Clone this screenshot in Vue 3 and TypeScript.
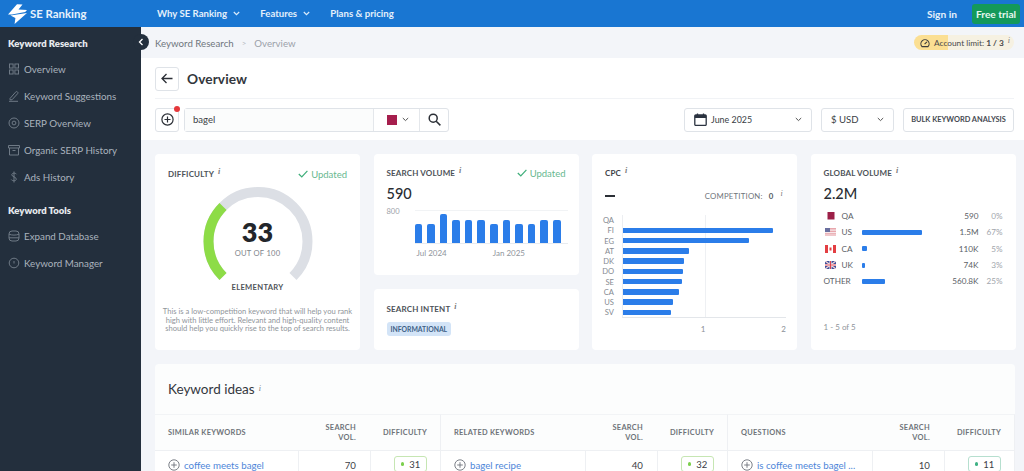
<script setup lang="ts">
const navItems = [
  { name: 'Overview', icon: 'grid' },
  { name: 'Keyword Suggestions', icon: 'pen' },
  { name: 'SERP Overview', icon: 'target' },
  { name: 'Organic SERP History', icon: 'box' },
  { name: 'Ads History', icon: 'dollar' },
]
const toolItems = [
  { name: 'Expand Database', icon: 'db' },
  { name: 'Keyword Manager', icon: 'clock' },
]
const volBars = [19, 19, 29, 23, 23, 23, 19, 23, 19, 19, 23, 23]
const cpc = [
  { c: 'QA', w: 0 }, { c: 'FI', w: 150 }, { c: 'EG', w: 126 }, { c: 'AT', w: 66 }, { c: 'DK', w: 60.5 },
  { c: 'DO', w: 60 }, { c: 'SE', w: 59 }, { c: 'CA', w: 56 }, { c: 'US', w: 49.5 }, { c: 'SV', w: 47.5 },
]
const globalRows = [
  { code: 'QA', flag: 'qa', bar: 0, vol: '590', pct: '0%' },
  { code: 'US', flag: 'us', bar: 60, vol: '1.5M', pct: '67%' },
  { code: 'CA', flag: 'ca', bar: 5, vol: '110K', pct: '5%' },
  { code: 'UK', flag: 'uk', bar: 3, vol: '74K', pct: '3%' },
  { code: 'OTHER', flag: '', bar: 23, vol: '560.8K', pct: '25%' },
]
const groups = [
  { head: 'SIMILAR KEYWORDS', kw: 'coffee meets bagel', vol: '70', diff: '31', teal: false },
  { head: 'RELATED KEYWORDS', kw: 'bagel recipe', vol: '40', diff: '32', teal: false },
  { head: 'QUESTIONS', kw: 'is coffee meets bagel ...', vol: '10', diff: '11', teal: true },
]
</script>

<template>
  <div class="page">
    <header class="topbar">
      <div class="brand">
        <svg class="logo" viewBox="0 0 20 20" width="20" height="20">
          <path d="M0 10.5 L9 0.3 L14.5 0.6 L10.5 5.6 L19 6 L17.2 8 L4 10.6 Z" fill="#fff" />
          <path d="M2.5 11.4 L19 9 L6.6 20 L7.4 14 Z" fill="#fff" />
        </svg>
        <span>SE Ranking</span>
      </div>
      <nav class="topnav">
        <span class="tn tn1">Why SE Ranking
          <svg width="7" height="5" viewBox="0 0 7 5"><path d="M.8 1l2.7 2.6L6.2 1" fill="none" stroke="#dcecfb" stroke-width="1.2" /></svg>
        </span>
        <span class="tn tn2">Features
          <svg width="7" height="5" viewBox="0 0 7 5"><path d="M.8 1l2.7 2.6L6.2 1" fill="none" stroke="#dcecfb" stroke-width="1.2" /></svg>
        </span>
        <span class="tn">Plans &amp; pricing</span>
      </nav>
      <span class="signin">Sign in</span>
      <span class="trial">Free trial</span>
    </header>

    <div class="body">
      <aside class="sidebar">
        <button class="collapse" type="button">
          <svg width="6" height="8" viewBox="0 0 6 8"><path d="M4.5 1L1.5 4l3 3" fill="none" stroke="#fff" stroke-width="1.3" /></svg>
        </button>
        <h4 class="side-head">Keyword Research</h4>
        <div v-for="n in navItems" :key="n.name" class="side-item">
          <svg class="side-ico" viewBox="0 0 12 12" width="12" height="12" fill="none" stroke="#6f7a86" stroke-width="1">
            <g v-if="n.icon === 'grid'">
              <rect x="1.5" y="1" width="3.6" height="4" /><rect x="6.9" y="1" width="3.6" height="4" />
              <rect x="1.5" y="7" width="3.6" height="4" /><rect x="6.9" y="7" width="3.6" height="4" />
            </g>
            <g v-else-if="n.icon === 'pen'">
              <path d="M2 8.5L7.5 2.2a1.2 1.2 0 0 1 2.2 1.4L4 9.8H2z" /><path d="M1 11.3h9" />
            </g>
            <g v-else-if="n.icon === 'target'">
              <circle cx="6" cy="6" r="5" /><circle cx="6" cy="6" r="1.9" />
            </g>
            <g v-else-if="n.icon === 'box'">
              <path d="M0.5 1.5h11v2.5H.5zM1.5 4v7h9V4M4.5 6.5h3" />
            </g>
            <path v-else d="M8.5 3.2C8 2 4 1.5 3.8 3.7 3.6 6 8.4 5.6 8.3 8.2 8.1 10.4 4 10 3.3 8.6M6 .5v11" />
          </svg>
          <span>{{ n.name }}</span>
        </div>
        <h4 class="side-head tools">Keyword Tools</h4>
        <div v-for="n in toolItems" :key="n.name" class="side-item">
          <svg class="side-ico" viewBox="0 0 12 12" width="12" height="12" fill="none" stroke="#6f7a86" stroke-width="1">
            <g v-if="n.icon === 'db'">
              <rect x="1" y="1" width="10" height="10" rx="3" /><path d="M1 4.2c3 1.2 7 1.2 10 0M1 7.8h10" />
            </g>
            <g v-else>
              <circle cx="6" cy="6" r="4.8" /><path d="M6 4v2.5" />
            </g>
          </svg>
          <span>{{ n.name }}</span>
        </div>
      </aside>

      <main class="main">
        <div class="crumbs">
          <span class="c1">Keyword Research</span>
          <span class="c2">&gt;</span>
          <span class="c3">Overview</span>
          <span class="limit">
            <svg class="lim-ico" width="10" height="10" viewBox="0 0 10 10" fill="none" stroke="#3c3c3c" stroke-width="1.1"><path d="M2 8.6A4.1 4.1 0 1 1 8 8.6zM4.6 6.2l2.3-2.4" /></svg>
            <span>Account limit: <b>1 / 3</b><i class="inf">i</i></span>
          </span>
        </div>

        <div class="head-block">
          <div class="title-row">
            <button class="square" type="button">
              <svg width="12" height="11" viewBox="0 0 12 11" fill="none" stroke="#2b2f36" stroke-width="1.3"><path d="M11.5 5.5H1M5.5 1L1 5.5 5.5 10" /></svg>
            </button>
            <h1>Overview</h1>
          </div>
          <div class="search-row">
            <button class="square plus" type="button">
              <svg width="13" height="13" viewBox="0 0 13 13" fill="none" stroke="#2b2f36" stroke-width="1.2"><circle cx="6.5" cy="6.5" r="5.6" /><path d="M6.5 3.5v6M3.5 6.5h6" /></svg>
              <span class="dot"></span>
            </button>
            <div class="search">
              <span class="q">bagel</span>
              <span class="country">
                <span class="qa-sq"></span>
                <svg width="7" height="5" viewBox="0 0 7 5"><path d="M.8 1l2.7 2.6L6.2 1" fill="none" stroke="#555" stroke-width="1" /></svg>
              </span>
              <span class="glass">
                <svg width="13" height="13" viewBox="0 0 13 13" fill="none" stroke="#2b2f36" stroke-width="1.5"><circle cx="5.2" cy="5.2" r="4" /><path d="M8.2 8.2L12.4 12.4" /></svg>
              </span>
            </div>
            <div class="select date">
              <svg width="13" height="13" viewBox="0 0 13 13"><rect x="0.8" y="2" width="11.4" height="10.4" rx="1" fill="none" stroke="#2b3340" stroke-width="1.3" /><rect x="0.8" y="2" width="11.4" height="3" fill="#2b3340" /><path d="M3.5 0.5v2M9.5 0.5v2" stroke="#2b3340" stroke-width="1.3" /></svg>
              <span>June 2025</span>
              <svg class="chev" width="7" height="5" viewBox="0 0 7 5"><path d="M.8 1l2.7 2.6L6.2 1" fill="none" stroke="#555" stroke-width="1" /></svg>
            </div>
            <div class="select usd">
              <span>$ USD</span>
              <svg class="chev" width="7" height="5" viewBox="0 0 7 5"><path d="M.8 1l2.7 2.6L6.2 1" fill="none" stroke="#555" stroke-width="1" /></svg>
            </div>
            <button class="bulk" type="button">BULK KEYWORD ANALYSIS</button>
          </div>
        </div>

        <div class="content">
          <section class="cards">
            <article class="card difficulty">
              <div class="card-top">
                <span class="label">DIFFICULTY<i class="inf">i</i></span>
                <span class="updated">
                  <svg width="10" height="8" viewBox="0 0 10 8"><path d="M.8 4l3 3L9.4.8" fill="none" stroke="#3fae7a" stroke-width="1.2" /></svg>
                  Updated
                </span>
              </div>
              <div class="gauge">
                <svg width="110" height="96" viewBox="0 0 110 96">
                  <path d="M 20 89.5 A 49.5 49.5 0 1 1 90 89.5" fill="none" stroke="#dcdfe5" stroke-width="10" />
                  <path d="M 20 89.5 A 49.5 49.5 0 0 1 20 19.5" fill="none" stroke="#8ddc47" stroke-width="10" />
                </svg>
                <div class="gauge-text">
                  <b>33</b>
                  <span>OUT OF 100</span>
                </div>
              </div>
              <div class="elementary">ELEMENTARY</div>
              <p class="desc">This is a low-competition keyword that will help you rank high with little effort. Relevant and high-quality content should help you quickly rise to the top of search results.</p>
            </article>

            <div class="stack">
              <article class="card vol">
                <div class="card-top">
                  <span class="label">SEARCH VOLUME<i class="inf">i</i></span>
                  <span class="updated">
                    <svg width="10" height="8" viewBox="0 0 10 8"><path d="M.8 4l3 3L9.4.8" fill="none" stroke="#3fae7a" stroke-width="1.2" /></svg>
                    Updated
                  </span>
                </div>
                <div class="big">590</div>
                <div class="vol-chart">
                  <span class="y800">800</span>
                  <div class="vol-plot">
                    <span v-for="(h, i) in volBars" :key="i" class="vbar" :style="{ height: h + 'px' }"></span>
                  </div>
                </div>
                <div class="vol-x"><span>Jul 2024</span><span>Jan 2025</span></div>
              </article>
              <article class="card intent">
                <span class="label">SEARCH INTENT<i class="inf">i</i></span>
                <span class="tag">INFORMATIONAL</span>
              </article>
            </div>

            <article class="card cpc">
              <span class="label dark">CPC<i class="inf">i</i></span>
              <div class="cpc-row">
                <span class="dash"></span>
                <span class="comp">COMPETITION: <b>0</b><i class="inf">i</i></span>
              </div>
              <div class="cpc-chart">
                <div v-for="r in cpc" :key="r.c" class="cpc-line">
                  <span class="cc">{{ r.c }}</span>
                  <span class="hbar" :style="{ width: r.w + 'px' }"></span>
                </div>
                <span class="grid-1"></span>
              </div>
              <div class="cpc-x"><span>1</span><span>2</span></div>
            </article>

            <article class="card global">
              <span class="label">GLOBAL VOLUME<i class="inf">i</i></span>
              <div class="big">2.2M</div>
              <div class="g-table">
                <div v-for="r in globalRows" :key="r.code" class="g-row">
                  <span class="g-name" :class="{ other: !r.flag }">
                    <svg v-if="r.flag" class="flag" width="11" height="8" viewBox="0 0 11 8">
                      <g v-if="r.flag === 'qa'"><rect x="2.5" width="7" height="7.5" fill="#9c2048" /></g>
                      <g v-else-if="r.flag === 'us'">
                        <rect width="11" height="8" fill="#e8a6ac" /><rect y="1.5" width="11" height="1.2" fill="#f7e8ea" /><rect y="4" width="11" height="1.2" fill="#f7e8ea" /><rect y="6.5" width="11" height="1" fill="#f7e8ea" /><rect width="5" height="4" fill="#6a6f9e" />
                      </g>
                      <g v-else-if="r.flag === 'ca'">
                        <rect width="11" height="8" fill="#fff" /><rect width="3" height="8" fill="#e33e42" /><rect x="8" width="3" height="8" fill="#e33e42" /><rect x="4.5" y="2.5" width="2" height="3" fill="#e33e42" />
                      </g>
                      <g v-else>
                        <rect width="11" height="8" fill="#3f4f9a" /><path d="M0 0l11 8M11 0L0 8" stroke="#f2d4d8" stroke-width="1.3" /><path d="M5.5 0v8M0 4h11" stroke="#fff" stroke-width="2" /><path d="M5.5 0v8M0 4h11" stroke="#d8434f" stroke-width="1" />
                      </g>
                    </svg>
                    {{ r.code }}
                  </span>
                  <span class="g-bar-cell"><span class="g-bar" :style="{ width: r.bar + 'px' }"></span></span>
                  <span class="g-vol">{{ r.vol }}</span>
                  <span class="g-pct">{{ r.pct }}</span>
                </div>
              </div>
              <div class="pager">1 - 5 of 5</div>
            </article>
          </section>

          <section class="ideas">
            <h2>Keyword ideas<i class="inf">i</i></h2>
            <div class="tbl">
              <div v-for="g in groups" :key="g.head" class="tgroup">
                <div class="th kw-col">{{ g.head }}</div>
                <div class="th num-col">SEARCH<br />VOL.</div>
                <div class="th diff-col">DIFFICULTY</div>
                <div class="td kw-col">
                  <svg width="12" height="12" viewBox="0 0 12 12" fill="none" stroke="#6d727a" stroke-width="0.9"><circle cx="6" cy="6" r="5.2" /><path d="M6 3.2v5.6M3.2 6h5.6" /></svg>
                  <a>{{ g.kw }}</a>
                </div>
                <div class="td num-col">{{ g.vol }}</div>
                <div class="td diff-col"><span class="chip" :class="{ teal: g.teal }"><i></i>{{ g.diff }}</span></div>
              </div>
            </div>
          </section>
        </div>
      </main>
    </div>
  </div>
</template>

<style scoped>
* { box-sizing: border-box; }
.page {
  width: 1024px; height: 471px; overflow: hidden;
  font-family: Lato, "Open Sans", sans-serif; color: #2b2f36; background: #f3f5f9;
  display: flex; flex-direction: column;
}
.topbar {
  height: 27px; flex: none; background: #1976d2; color: #e4f0fb;
  display: flex; align-items: center; padding: 0 4px 0 8px; font-size: 9.6px; font-weight: 700;
}
.brand { display: flex; align-items: center; width: 149px; gap: 2px; font-size: 11.4px; color: #e8f2fc; }
.topnav { display: flex; flex: 1; }
.tn svg { margin-left: 4px; vertical-align: 1px; }
.tn1 { margin-right: 20px; }
.tn2 { margin-right: 20px; }
.signin { margin-right: 15px; font-size: 10.2px; }
.trial {
  width: 48px; height: 20px; background: #14995a; border-radius: 3px; color: #e8f7ef;
  display: flex; align-items: center; justify-content: center; font-size: 10.2px;
}
.body { flex: 1; display: flex; min-height: 0; }
.sidebar {
  width: 141px; flex: none; background: #232f3d; position: relative; padding: 11px 0 0 8px; color: #b8c0c9;
}
.collapse {
  position: absolute; right: -8px; top: 7px; width: 16px; height: 16px; border-radius: 50%;
  border: 0; background: #232f3d; padding: 0; display: flex; align-items: center; justify-content: center; z-index: 2;
}
.side-head { margin: 0; font-size: 9.5px; font-weight: 800; color: #e6e9ed; height: 12px; line-height: 12px; }
.side-head.tools { margin-top: 20px; }
.side-item { height: 27px; display: flex; align-items: center; font-size: 9.8px; gap: 4px; color: #aab3bd; position: relative; top: 5px; }
.side-ico { flex: none; }
.main { flex: 1; min-width: 0; display: flex; flex-direction: column; }
.crumbs {
  height: 31px; flex: none; display: flex; align-items: center; padding: 0 10px 0 14px; font-size: 9.7px; background: #f3f5f9; color: #6f757d;
}
.c2 { margin: 0 8px; color: #b5bac1; font-size: 8px; }
.c3 { color: #9ba1a9; }
.limit {
  margin-left: auto; width: 100px; height: 15px; border-radius: 8px; padding-left: 6px; flex: none;
  background: linear-gradient(90deg, #fbdf93 34%, #f6f1e2 34%); color: #4a4a4a;
  display: flex; align-items: center; gap: 4px; font-size: 8.3px; white-space: nowrap;
}
.lim-ico { flex: none; }
.limit b { font-weight: 700; }
.inf { font-family: "Liberation Serif", serif; font-size: 8px; font-style: italic; color: #777; margin-left: 4px; position: relative; top: -3px; }
.head-block { background: #fff; flex: none; height: 82px; padding: 0 10px 0 14px; }
.title-row { height: 41px; padding-top: 1px; display: flex; align-items: center; gap: 8px; border-bottom: 1px solid #f1f3f6; }
.square {
  width: 24px; height: 24px; background: #fff; border: 1px solid #dfe3e8; border-radius: 3px; padding: 0;
  display: flex; align-items: center; justify-content: center; position: relative;
}
h1 { margin: 0; font-size: 13.7px; font-weight: 700; color: #33373d; letter-spacing: .1px; }
.search-row { display: flex; align-items: center; height: 41px; }
.plus { margin-right: 5px; }
.dot { position: absolute; top: -3px; right: -2px; width: 6px; height: 6px; border-radius: 50%; background: #e5383b; }
.search {
  width: 265px; height: 24px; border: 1px solid #dfe3e8; border-radius: 3px; display: flex; align-items: center; font-size: 9.5px;
}
.q { flex: 1; padding-left: 8px; color: #3a3e45; background: #fbfcfc; height: 100%; display: flex; align-items: center; }
.country { width: 46px; height: 100%; border-left: 1px solid #e4e7eb; display: flex; align-items: center; gap: 5px; padding-left: 13px; }
.qa-sq { width: 10px; height: 10px; background: #a61e4d; }
.glass { width: 29px; height: 100%; border-left: 1px solid #e4e7eb; display: flex; align-items: center; justify-content: center; }
.select {
  height: 24px; border: 1px solid #dfe3e8; border-radius: 3px; display: flex; align-items: center; background: #fff; padding: 0 9px; color: #3a3e45;
}
.date { width: 128px; margin-left: auto; gap: 4px; font-size: 8.9px; }
.usd { width: 73px; margin-left: 9px; font-size: 9.6px; }
.chev { margin-left: auto; }
.bulk {
  width: 111px; height: 24px; margin-left: 9px; background: #fff; border: 1px solid #dfe3e8; border-radius: 3px; padding: 0;
  font-family: inherit; font-size: 7.4px; font-weight: 700; color: #454a52; white-space: nowrap;
}
.content { padding: 14px 9px 0 14px; flex: 1; min-height: 0; }
.cards { display: grid; grid-template-columns: repeat(4, 205px); grid-template-rows: 196px; column-gap: 13.5px; height: 196px; }
.card { background: #fff; border-radius: 4px; padding: 13px; min-height: 0; }
.card-top { display: flex; justify-content: space-between; align-items: center; height: 12px; }
.label { display: block; height: 12px; line-height: 12px; font-size: 8px; font-weight: 700; color: #4d5258; letter-spacing: .15px; }
.label.dark { color: #3d4147; }
.updated { font-size: 9.5px; color: #67b88f; display: flex; align-items: center; gap: 3px; }
.difficulty { padding-top: 14px; }
.gauge { position: relative; width: 110px; height: 96px; margin: 7px auto 0; }
.gauge svg { display: block; }
.gauge-text { position: absolute; left: 0; right: 0; top: 30px; text-align: center; }
.gauge-text b { display: block; font-size: 27px; line-height: 30px; font-weight: 800; color: #23262b; }
.gauge-text span { display: block; font-size: 7.6px; line-height: 12px; color: #80858c; letter-spacing: .25px; }
.elementary { text-align: center; font-size: 7.6px; font-weight: 700; color: #4f545a; letter-spacing: .3px; margin-top: -1px; line-height: 10px; }
.desc { margin: 15px -7px 0; font-size: 7.6px; line-height: 8.7px; text-align: center; color: #90959b; }
.stack { display: flex; flex-direction: column; gap: 14px; min-height: 0; }
.vol { height: 121px; flex: none; padding-top: 13px; }
.big { font-size: 14.5px; font-weight: 500; color: #2a2d33; line-height: 18px; margin-top: 6px; }
.vol-chart { display: flex; margin-top: 7px; height: 34px; }
.y800 { width: 28px; font-size: 7.5px; color: #9ca1a8; line-height: 10px; margin-top: -3px; }
.vol-plot {
  flex: 1; height: 34px; border-top: 1px solid #f1f3f5; border-bottom: 1px solid #e8ebef; display: flex; align-items: flex-end; gap: 5px; margin-right: -2px;
}
.vbar { width: 7.6px; background: #2b7de9; border-radius: 2px 2px 0 0; flex: none; }
.vol-x { display: flex; font-size: 8px; color: #8f949b; padding-left: 30px; margin-top: 4px; gap: 46px; }
.intent { flex: 1; padding: 14px 13px 0; display: flex; flex-direction: column; align-items: flex-start; gap: 7px; }
.tag { background: #d3e4f7; color: #3d5f86; font-size: 6.8px; font-weight: 700; padding: 3px 4px; border-radius: 3px; line-height: 8px; }
.cpc-row { display: flex; justify-content: space-between; align-items: center; margin-top: 10px; height: 14px; padding-right: 1px; }
.dash { width: 10px; height: 1.6px; background: #2b2f36; }
.comp { font-size: 7.8px; color: #6f747b; letter-spacing: .2px; }
.comp b { margin-left: 4px; color: #55595f; }
.comp .inf { margin-left: 7px; }
.cpc-chart {
  position: relative; margin-top: 12px; margin-left: 17px; width: 164px; height: 103px;
  border-left: 1px solid #eceef1; border-bottom: 1px solid #e3e6ea;
}
.cpc-line { height: 10.25px; display: flex; align-items: center; position: relative; z-index: 1; }
.cc { position: absolute; right: calc(100% + 9px); font-size: 7.6px; color: #858a91; }
.hbar { height: 5.6px; background: #2b7de9; border-radius: 0 1px 1px 0; }
.grid-1 { position: absolute; left: 82px; top: 0; bottom: 0; width: 1px; background: #eef0f3; }
.cpc-x { margin-left: 17px; width: 164px; display: flex; justify-content: flex-end; gap: 76px; font-size: 8px; color: #8b9097; margin-top: 6px; }
.g-table { margin-top: 5px; }
.g-row { height: 16.3px; display: flex; align-items: center; font-size: 8.2px; color: #5c6167; }
.g-name { width: 38px; display: flex; align-items: center; gap: 6px; padding-left: 1px; flex: none; }
.g-name.other { padding-left: 0; }
.flag { flex: none; }
.g-bar-cell { width: 80px; flex: none; display: flex; }
.g-bar { height: 5px; background: #2b7de9; border-radius: 1px; }
.g-vol { width: 37px; flex: none; text-align: right; white-space: nowrap; }
.g-pct { width: 24px; flex: none; text-align: right; color: #a1a6ac; }
.global { padding-top: 13px; }
.pager { font-size: 8px; color: #8f949a; margin-top: 33px; }
.ideas { margin-top: 14px; background: #fcfdfd; border-radius: 4px 4px 0 0; height: 120px; width: 860px; }
h2 { margin: 0; height: 50px; padding: 17px 0 0 13px; font-size: 13.5px; font-weight: 400; color: #34383e; line-height: 16px; }
.tbl { display: flex; }
.tgroup { display: grid; grid-template-columns: auto 72px 71px; grid-template-rows: 36px 30px; }
.tgroup:first-child { flex: 0 0 286px; }
.tgroup:nth-child(2) { flex: 0 0 287px; }
.tgroup:last-child { flex: 0 0 287px; }
.th { font-size: 7.4px; font-weight: 700; color: #6e7379; letter-spacing: .3px; display: flex; align-items: center; border-top: 1px solid #f2f4f6; }
.td { background: #fff; font-size: 9.7px; border-top: 1px solid #eef0f3; display: flex; align-items: flex-start; padding-top: 8px; }
.kw-col { padding-left: 13px; gap: 4px; }
.th.num-col { justify-content: flex-end; text-align: right; padding-right: 14px; line-height: 10px; }
.td.num-col { justify-content: flex-end; padding-right: 14px; border-left: 1px solid #eef0f3; color: #3c4046; }
.th.diff-col { justify-content: center; border-right: 1px solid #eef0f3; }
.td.diff-col { justify-content: flex-end; padding: 5px 13px 0 0; border-left: 1px solid #eef0f3; border-right: 1px solid #eef0f3; }
.td a { color: #4e86d9; white-space: nowrap; }
.chip {
  width: 33px; height: 16px; border: 1px solid #c6e6b3; border-radius: 3px; display: flex; align-items: center; justify-content: center; gap: 5px; font-size: 9.5px; background: #fff; color: #3c4046;
}
.chip i { width: 3.5px; height: 3.5px; border-radius: 50%; background: #7ccf4d; }
.chip.teal { border-color: #b6dfcf; }
.chip.teal i { background: #3fb184; }
</style>
